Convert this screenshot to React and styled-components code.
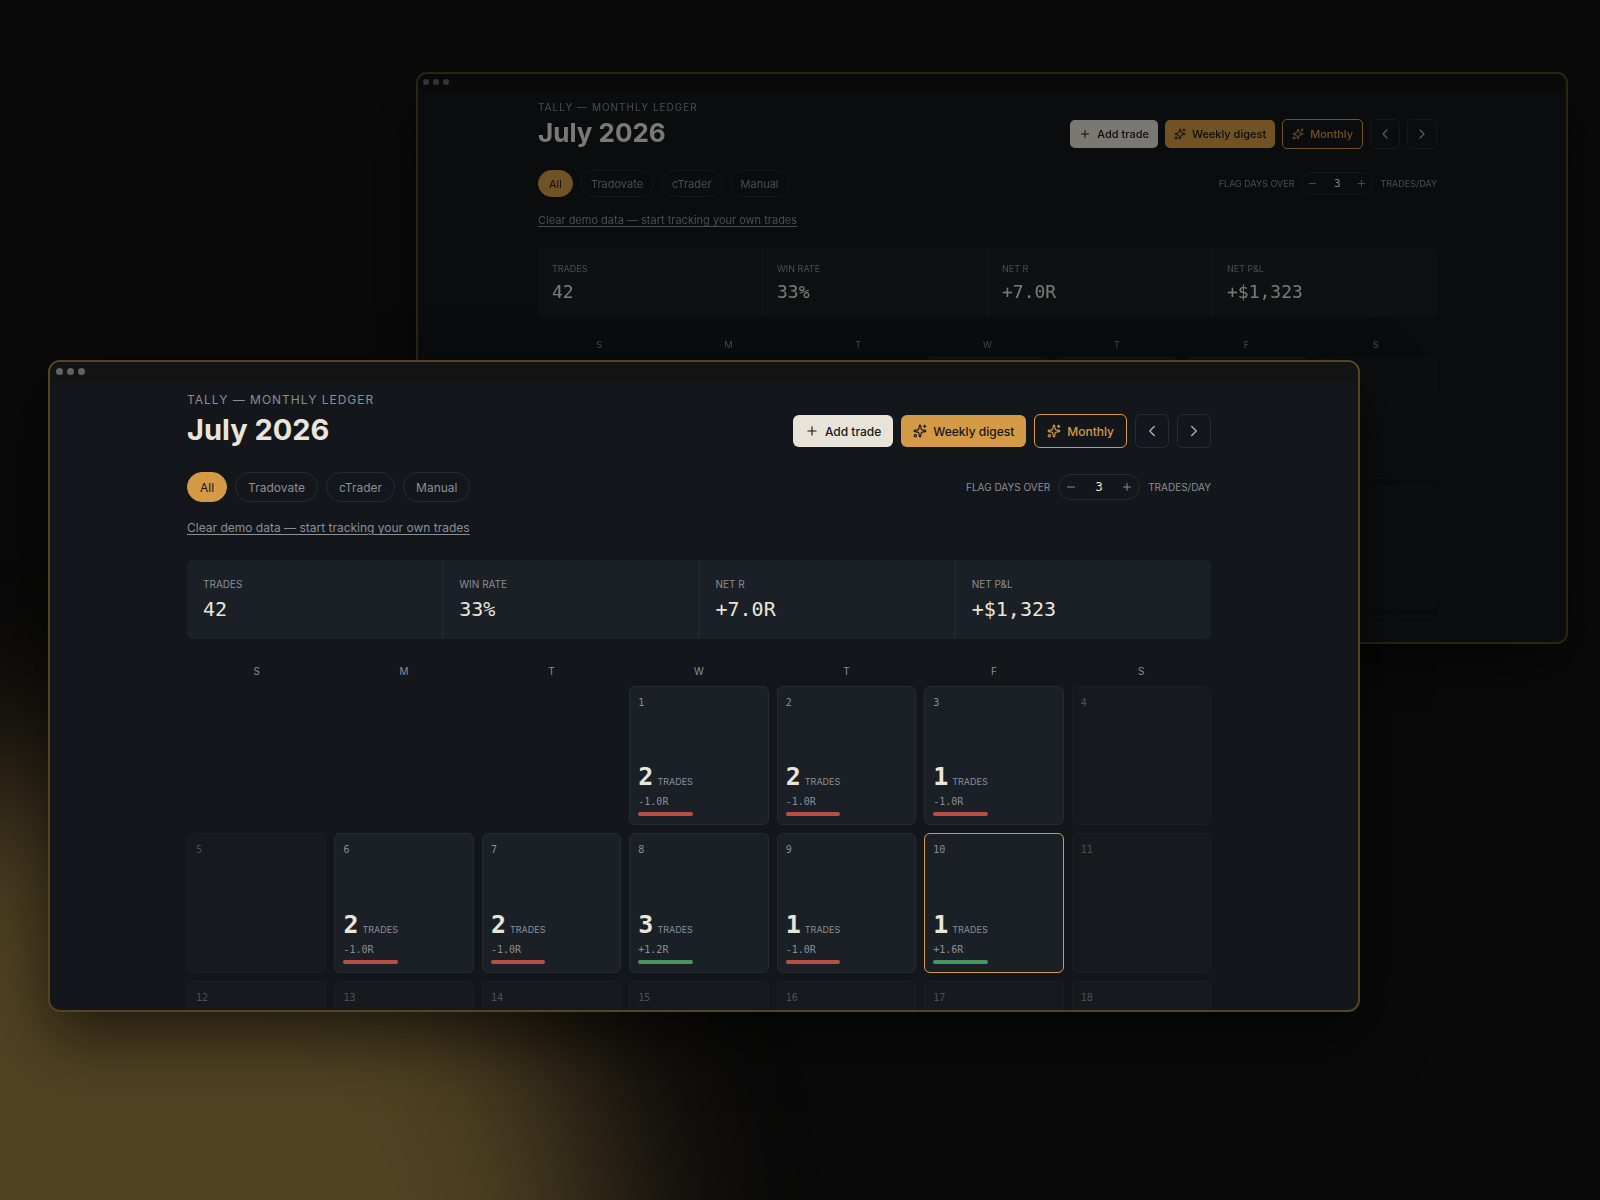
import React, { useState } from "react";
import styled, { createGlobalStyle, css, ThemeProvider } from "styled-components";
import { ChevronLeft, ChevronRight, Minus, Plus, Sparkles } from "lucide-react";

const GlobalStyle = createGlobalStyle`
* {
    box-sizing: border-box;
}
body {
    margin: 0;
    background: #0a0a0a;
}
button, input {
    font: inherit;
    margin: 0;
}
`

const mono = `"DejaVu Sans Mono", monospace`

// the window in front
const large = {
    bar: 20,
    dot: 7,
    dotGap: 4,
    dotPad: 6,
    gutter: 10,
    content: 1024,
    top: 10,
    eyebrow: 12,
    eyebrowLine: 16,
    title: 29,
    titleLine: 36,
    titleGap: 4,
    headGap: 24,
    text: 12,
    icon: 14,
    arrow: 18,
    button: 32,
    buttonPad: 12,
    square: 34,
    gap: 8,
    chip: 30,
    chipPad: 13,
    small: 10,
    stepper: 26,
    stepperWidth: 82,
    linkGap: 18,
    linkLine: 16,
    statsGap: 24,
    stats: 79,
    statPad: 16,
    stat: 20,
    statLine: 26,
    weekGap: 24,
    week: 16,
    weekBottom: 7,
    cellPad: 8,
    count: 25,
    unit: 9,
    radius: 6,
}

// the same window, further back
const compact = {
    bar: 18,
    dot: 6,
    dotGap: 4,
    dotPad: 5,
    gutter: 9,
    content: 899,
    top: 8,
    eyebrow: 10,
    eyebrowLine: 14,
    title: 26,
    titleLine: 32,
    titleGap: 3,
    headGap: 21,
    text: 11,
    icon: 12,
    arrow: 16,
    button: 28,
    buttonPad: 9,
    square: 30,
    gap: 7,
    chip: 27,
    chipPad: 11,
    small: 9,
    stepper: 23,
    stepperWidth: 72,
    linkGap: 16,
    linkLine: 14,
    statsGap: 21,
    stats: 69,
    statPad: 14,
    stat: 18,
    statLine: 23,
    weekGap: 21,
    week: 14,
    weekBottom: 5,
    cellPad: 7,
    count: 21,
    unit: 8,
    radius: 5,
}

const Stage = styled.main`
position: relative;
min-height: 100vh;
overflow: hidden;
background: #0a0a0a;
font-family: Inter, sans-serif;
`
const Glow = styled.div`
position: absolute;
left: -24%;
top: 64%;
width: 62%;
aspect-ratio: 1;
border-radius: 50%;
background: #504223;
filter: blur(92px);
`
const Window = styled.section`
position: absolute;
left: ${p => p.$back ? "26%" : "3%"};
top: ${p => p.$back ? "6%" : "30%"};
width: ${p => p.$back ? "72%" : "82%"};
aspect-ratio: ${p => p.$back ? "1152 / 572" : "1312 / 652"};
overflow: hidden;
border: 2px solid #544522;
border-radius: ${p => p.$back ? 11 : 12}px;
background: #13171b;
box-shadow: 0 24px 64px rgba(0, 0, 0, 0.6);
${p => p.$back && css`filter: brightness(0.53);`}
`
const TitleBar = styled.div`
display: flex;
align-items: center;
gap: ${p => p.theme.dotGap}px;
height: ${p => p.theme.bar}px;
padding: 0 0 2px ${p => p.theme.dotPad}px;
background: #141314;
`
const Dot = styled.span`
width: ${p => p.theme.dot}px;
height: ${p => p.theme.dot}px;
border-radius: 50%;
background: #626263;
`
const Page = styled.div`
padding: ${p => p.theme.top}px ${p => p.theme.gutter}px 0 0;
font-size: ${p => p.theme.text}px;
color: #8b8e94;
`
const Content = styled.div`
max-width: ${p => p.theme.content}px;
margin: 0 auto;
`
const Row = styled.div`
display: flex;
align-items: center;
justify-content: space-between;
`
const Head = styled(Row)`
align-items: flex-end;
margin-bottom: ${p => p.theme.headGap}px;
`
const Eyebrow = styled.p`
margin: 0;
font-size: ${p => p.theme.eyebrow}px;
line-height: ${p => p.theme.eyebrowLine}px;
letter-spacing: 1px;
text-transform: uppercase;
`
const Title = styled.h1`
margin: ${p => p.theme.titleGap}px 0 0;
font-size: ${p => p.theme.title}px;
line-height: ${p => p.theme.titleLine}px;
font-weight: 700;
color: #e9e5da;
`
const Group = styled.div`
display: flex;
align-items: center;
gap: ${p => p.theme.gap}px;
`
const Button = styled.button`
display: flex;
align-items: center;
gap: 6px;
height: ${p => p.theme.button}px;
padding: 0 ${p => p.theme.buttonPad}px;
border: 0;
border-radius: ${p => p.theme.radius}px;
background: #e7e3d8;
color: #14171b;
font-weight: 500;
white-space: nowrap;
cursor: pointer;
svg {
    width: ${p => p.theme.icon}px;
    height: ${p => p.theme.icon}px;
}
`
const GoldButton = styled(Button)`
background: #d49a45;
`
const OutlineButton = styled(Button)`
height: ${p => p.theme.square}px;
border: 1px solid #d49a45;
background: transparent;
color: #d49a45;
`
const ArrowButton = styled(Button)`
justify-content: center;
width: ${p => p.theme.square}px;
height: ${p => p.theme.square}px;
padding: 0;
border: 1px solid #272b30;
background: transparent;
color: #a9aaa9;
svg {
    width: ${p => p.theme.arrow}px;
    height: ${p => p.theme.arrow}px;
}
`
const Chip = styled.button`
height: ${p => p.theme.chip}px;
padding: 0 ${p => p.theme.chipPad - 1}px;
border: 1px solid ${p => p.$active ? "#d49a45" : "#272b30"};
border-radius: 15px;
background: ${p => p.$active ? "#d49a45" : "transparent"};
color: ${p => p.$active ? "#14171b" : "#8b8e94"};
cursor: pointer;
`
const Flag = styled(Group)`
font-size: ${p => p.theme.small}px;
text-transform: uppercase;
`
const Stepper = styled.div`
display: flex;
align-items: center;
justify-content: space-between;
width: ${p => p.theme.stepperWidth}px;
height: ${p => p.theme.stepper}px;
padding: 0 ${p => p.theme.gap - 2}px;
border: 1px solid #272b30;
border-radius: 13px;
`
const StepButton = styled.button`
display: flex;
padding: 0;
border: 0;
background: none;
color: #8b8e94;
cursor: pointer;
`
const StepInput = styled.input`
width: 24px;
padding: 0;
border: 0;
background: none;
color: #e9e5da;
font-family: ${mono};
font-size: ${p => p.theme.text}px;
text-align: center;
`
const ClearLink = styled.a`
display: table;
margin-top: ${p => p.theme.linkGap}px;
line-height: ${p => p.theme.linkLine}px;
color: #8b8e94;
text-underline-offset: 2px;
`
const Stats = styled.dl`
display: grid;
grid-template-columns: repeat(4, 1fr);
gap: 1px;
height: ${p => p.theme.stats}px;
margin: ${p => p.theme.statsGap}px 0 ${p => p.theme.weekGap}px;
border-radius: ${p => p.theme.radius}px;
overflow: hidden;
background: #262b30;
`
const Stat = styled.div`
padding: ${p => p.theme.statPad}px;
background: #1a2026;
dt {
    font-size: ${p => p.theme.small}px;
    line-height: ${p => p.theme.linkLine}px;
}
dd {
    margin: 4px 0 0;
    font-family: ${mono};
    font-size: ${p => p.theme.stat}px;
    line-height: ${p => p.theme.statLine}px;
    color: #e9e5da;
}
`
const Week = styled.div`
display: grid;
grid-template-columns: repeat(7, 1fr);
gap: ${p => p.theme.gap}px;
`
const WeekDays = styled(Week)`
margin-bottom: ${p => p.theme.weekBottom}px;
font-size: ${p => p.theme.small}px;
line-height: ${p => p.theme.week}px;
text-align: center;
`
const Cell = styled.div`
display: flex;
flex-direction: column;
align-items: flex-start;
justify-content: space-between;
aspect-ratio: 1;
padding: ${p => p.theme.cellPad}px;
border: 1px solid ${p => p.$today ? "#d49a45" : "#272b30"};
border-radius: ${p => p.theme.radius}px;
background: #1a2026;
font-family: ${mono};
font-size: ${p => p.theme.small}px;
line-height: ${p => p.theme.linkLine}px;
${p => p.$empty && css`
background: #161a1e;
border-color: #1c1f23;
color: #4e5053;
`}
`
const Summary = styled.div`
display: flex;
flex-direction: column;
`
const Count = styled.div`
display: flex;
align-items: baseline;
gap: 4px;
strong {
    font-size: ${p => p.theme.count}px;
    line-height: ${p => p.theme.count}px;
    color: #e9e5da;
}
span {
    font-family: Inter, sans-serif;
    font-size: ${p => p.theme.unit}px;
}
`
const Result = styled.div`
margin: 4px 0 2px;
`
const Bar = styled.div`
height: 4px;
border-radius: 2px;
background: ${p => p.$win ? "#4a9460" : "#bb4d42"};
`

const sources = ["All", "Tradovate", "cTrader", "Manual"]

const stats = [
    ["TRADES", "42"],
    ["WIN RATE", "33%"],
    ["NET R", "+7.0R"],
    ["NET P&L", "+$1,323"],
]

const trades = {
    1: [2, "-1.0R"],
    2: [2, "-1.0R"],
    3: [1, "-1.0R"],
    6: [2, "-1.0R"],
    7: [2, "-1.0R"],
    8: [3, "+1.2R"],
    9: [1, "-1.0R"],
    10: [1, "+1.6R"],
}

const today = 10
const days = Array.from({ length: 18 }, (_, i) => i + 1)

function Day({ day }) {
    const entry = trades[day]
    return (
        <Cell $empty={!entry} $today={day === today}>
            <span>{day}</span>
            {entry && (
                <Summary>
                    <Count>
                        <strong>{entry[0]}</strong>
                        <span>TRADES</span>
                    </Count>
                    <Result>{entry[1]}</Result>
                    <Bar $win={entry[1].startsWith("+")}/>
                </Summary>
            )}
        </Cell>
    )
}

function Ledger({ back }) {
    const [source, setSource] = useState("All")
    const [limit, setLimit] = useState(3)

    return (
        <ThemeProvider theme={back ? compact : large}>
            <Window $back={back}>
                <TitleBar>
                    <Dot/>
                    <Dot/>
                    <Dot/>
                </TitleBar>
                <Page>
                    <Content>
                        <Head>
                            <div>
                                <Eyebrow>Tally — Monthly Ledger</Eyebrow>
                                <Title>July 2026</Title>
                            </div>
                            <Group>
                                <Button><Plus/>Add trade</Button>
                                <GoldButton><Sparkles/>Weekly digest</GoldButton>
                                <OutlineButton><Sparkles/>Monthly</OutlineButton>
                                <ArrowButton aria-label="Previous month"><ChevronLeft/></ArrowButton>
                                <ArrowButton aria-label="Next month"><ChevronRight/></ArrowButton>
                            </Group>
                        </Head>
                        <Row>
                            <Group>
                                {sources.map(name => (
                                    <Chip key={name} $active={name === source} onClick={() => setSource(name)}>
                                        {name}
                                    </Chip>
                                ))}
                            </Group>
                            <Flag>
                                <label htmlFor={back ? "limit-back" : "limit"}>Flag days over</label>
                                <Stepper>
                                    <StepButton aria-label="Less" onClick={() => setLimit(limit - 1)}>
                                        <Minus size={back ? 11 : 12}/>
                                    </StepButton>
                                    <StepInput
                                        id={back ? "limit-back" : "limit"}
                                        value={limit}
                                        onChange={e => setLimit(Number(e.target.value) || 0)}
                                    />
                                    <StepButton aria-label="More" onClick={() => setLimit(limit + 1)}>
                                        <Plus size={back ? 11 : 12}/>
                                    </StepButton>
                                </Stepper>
                                <span>trades/day</span>
                            </Flag>
                        </Row>
                        <ClearLink href="#clear">Clear demo data — start tracking your own trades</ClearLink>
                        <Stats>
                            {stats.map(([label, value]) => (
                                <Stat key={label}>
                                    <dt>{label}</dt>
                                    <dd>{value}</dd>
                                </Stat>
                            ))}
                        </Stats>
                        <WeekDays>
                            {["S", "M", "T", "W", "T", "F", "S"].map((d, i) => <span key={i}>{d}</span>)}
                        </WeekDays>
                        <Week>
                            <span/>
                            <span/>
                            <span/>
                            {days.map(day => <Day key={day} day={day}/>)}
                        </Week>
                    </Content>
                </Page>
            </Window>
        </ThemeProvider>
    )
}

export default function App() {
    return (
        <Stage>
            <GlobalStyle/>
            <Glow/>
            <Ledger back/>
            <Ledger/>
        </Stage>
    )
}
